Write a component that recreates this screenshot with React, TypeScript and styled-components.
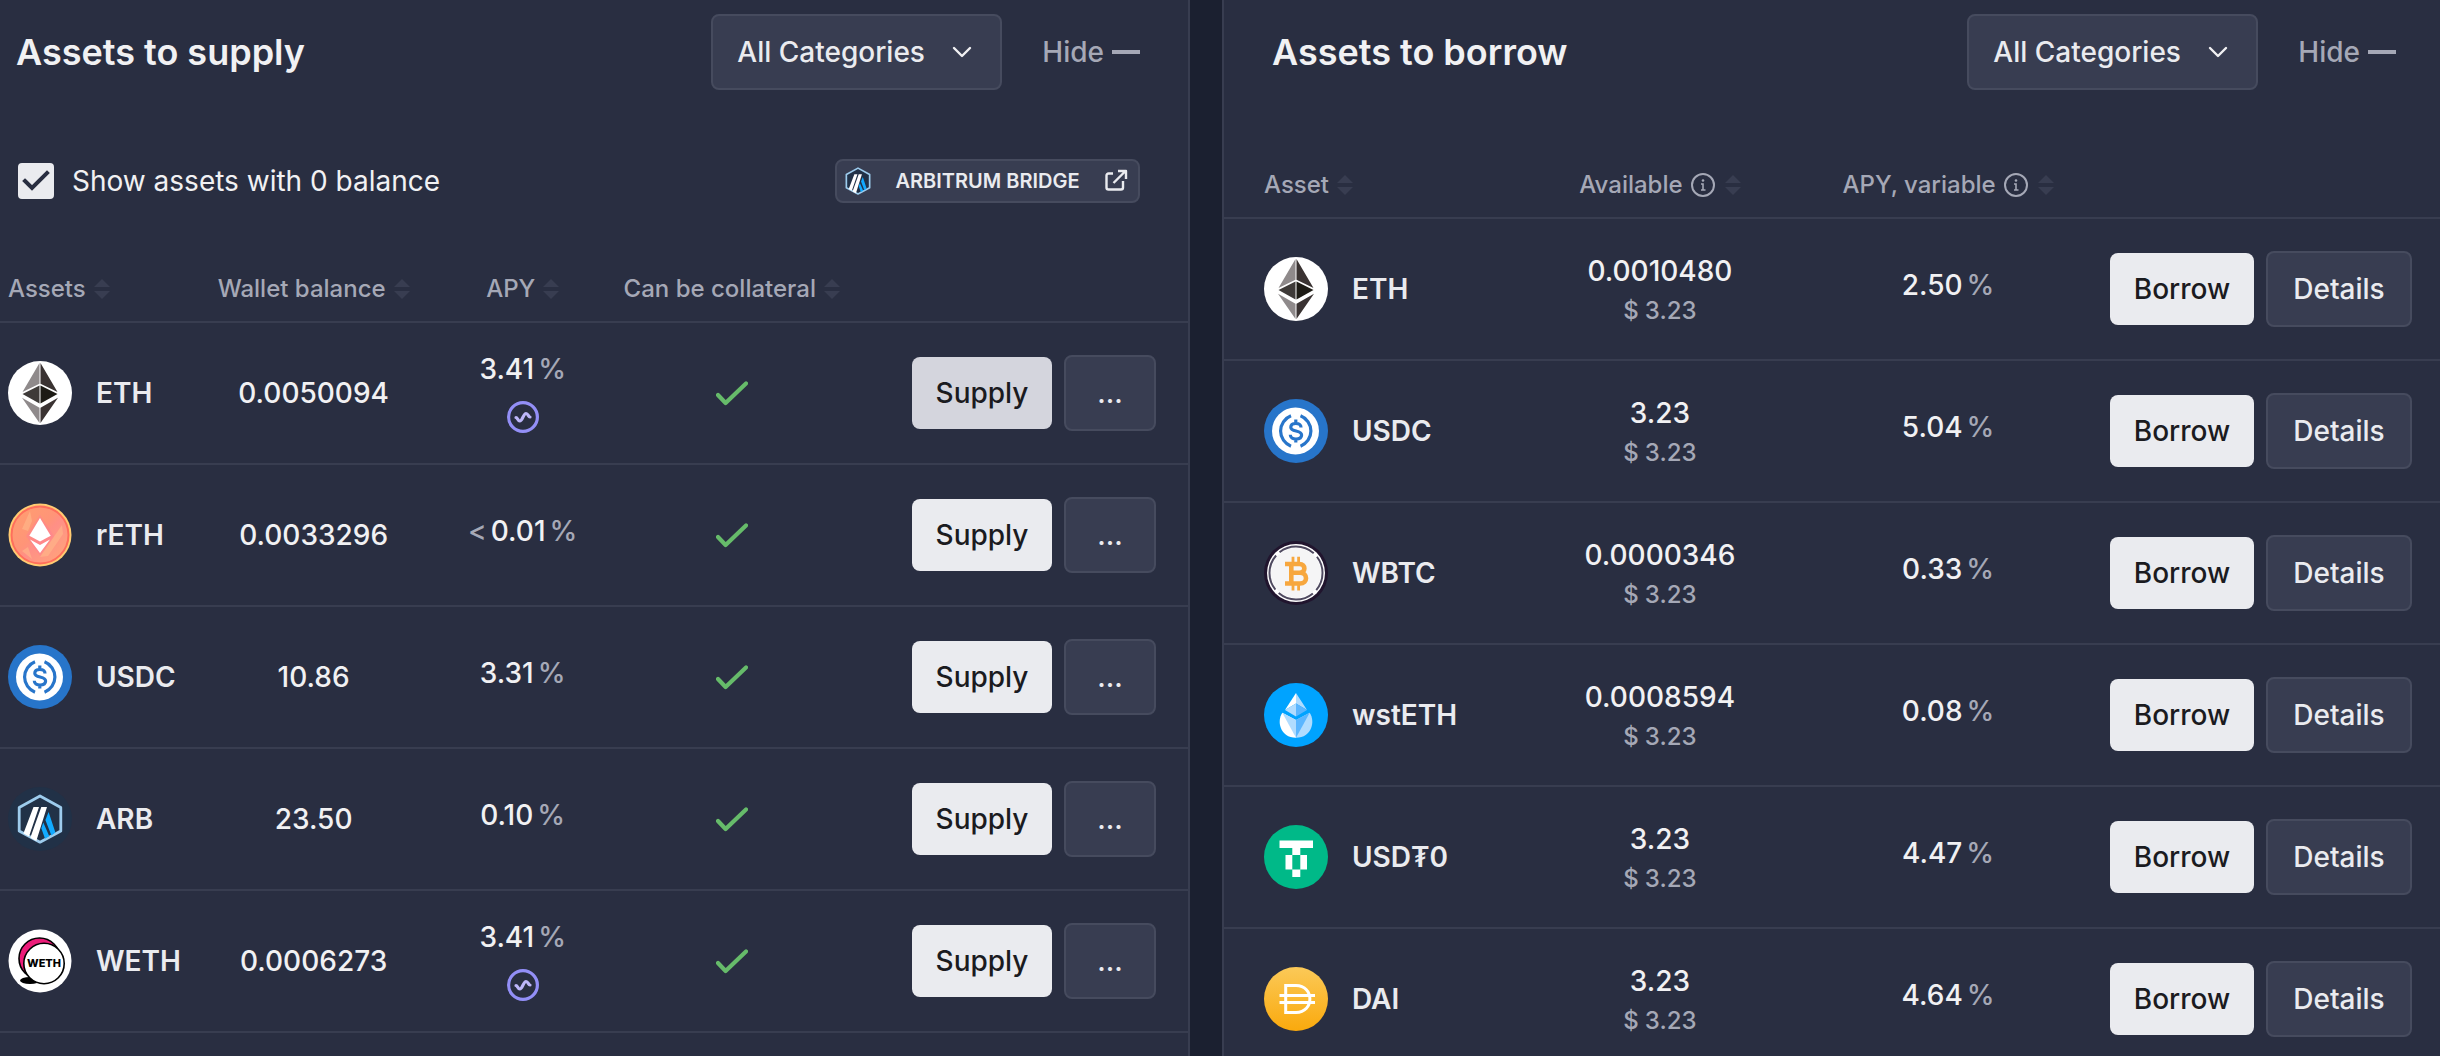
import React, { useState } from 'react';
import styled, { createGlobalStyle } from 'styled-components';

const color = {
  page: '#1b2030',
  panel: '#292e41',
  surface: '#383d51',
  outline: '#464b5e',
  divider: '#383d50',
  text: '#f1f1f3',
  light: '#eaebef',
  hover: '#d4d5dd',
  muted: '#a5a8b6',
  sort: '#383d51',
};

const GlobalStyle = createGlobalStyle`
  *, *::before, *::after { box-sizing: border-box; }
  body {
    margin: 0;
    background: ${color.page};
    color: ${color.text};
    font-family: Inter, "Liberation Sans", sans-serif;
    font-size: 28px;
    line-height: 40px;
  }
  button, input, select { font: inherit; margin: 0; }
  svg { display: block; flex: none; }
`;

const Dashboard = styled.main`
  display: grid;
  grid-template-columns: 1190fr 1218fr;
  gap: 32px;
  height: 100vh;
  overflow: hidden;
`;

const Panel = styled.section<{ $edge: 'left' | 'right' }>`
  min-width: 0;
  background: ${color.panel};
  ${(p) => `border-${p.$edge}: 2px solid ${color.divider};`}
`;

const PanelHeader = styled.header<{ $start: number; $end: number }>`
  display: flex;
  align-items: center;
  padding: 14px ${(p) => p.$end}px 0 ${(p) => p.$start}px;
`;

const Title = styled.h2`
  flex: 1;
  margin: 0;
  font-size: 36px;
  font-weight: 600;
  line-height: 52px;
`;

const SelectBox = styled.div`
  display: grid;
  align-items: center;
  & > * { grid-area: 1 / 1; }
  & > svg { justify-self: end; margin-right: 30px; pointer-events: none; }
`;

const Select = styled.select`
  appearance: none;
  width: 291px;
  height: 76px;
  padding: 0 24px;
  border: 2px solid ${color.outline};
  border-radius: 8px;
  background: ${color.surface};
  color: ${color.light};
  font-weight: 500;
`;

const HideButton = styled.button`
  display: flex;
  align-items: center;
  gap: 8px;
  margin-left: 40px;
  padding: 0;
  border: 0;
  background: none;
  color: ${color.muted};
  font-weight: 500;
`;

const Dash = styled.span`
  width: 28px;
  height: 4px;
  background: ${color.muted};
`;

const Toolbar = styled.div`
  display: flex;
  align-items: center;
  justify-content: space-between;
  margin: 69px 48px 54px 18px;
`;

const CheckLabel = styled.label`
  display: flex;
  align-items: center;
  gap: 18px;
`;

const CheckBox = styled.span`
  display: grid;
  place-items: center;
  & > * { grid-area: 1 / 1; }
  & > svg { pointer-events: none; }
`;

const CheckInput = styled.input`
  appearance: none;
  width: 36px;
  height: 36px;
  border-radius: 4px;
  border: 2px solid ${color.light};
  &:checked { background: ${color.light}; }
`;

const BridgeLink = styled.a`
  display: flex;
  align-items: center;
  height: 44px;
  padding: 0 10px 0 8px;
  border: 2px solid ${color.outline};
  border-radius: 8px;
  background: ${color.surface};
  color: ${color.light};
  font-size: 20px;
  font-weight: 600;
  line-height: 24px;
  text-decoration: none;
  text-transform: uppercase;
`;

const BridgeText = styled.span`
  min-width: 233px;
  padding: 0 20px;
  text-align: center;
`;

const Table = styled.table<{ $top?: number }>`
  width: 100%;
  table-layout: fixed;
  border-collapse: separate;
  border-spacing: 0;
  margin-top: ${(p) => p.$top ?? 0}px;
`;

const HeadCell = styled.th<{ $inset?: number }>`
  height: 66px;
  padding: 0 0 0 ${(p) => p.$inset ?? 0}px;
  border-bottom: 2px solid ${color.divider};
`;

const HeadLabel = styled.div<{ $start?: boolean }>`
  display: flex;
  justify-content: ${(p) => (p.$start ? 'flex-start' : 'center')};
`;

const SortButton = styled.button`
  display: flex;
  flex: none;
  align-items: center;
  padding: 0;
  border: 0;
  background: none;
  color: ${color.muted};
  font-size: 24px;
  font-weight: 500;
  line-height: 32px;
  white-space: nowrap;
  & > svg { margin-left: 8px; }
  & > svg + svg { margin-left: 10px; }
`;

const Cell = styled.td<{ $inset?: number; $end?: number }>`
  height: 142px;
  padding: 0 ${(p) => p.$end ?? 0}px 0 ${(p) => p.$inset ?? 0}px;
  border-bottom: 2px solid ${color.divider};
  vertical-align: middle;
  font-weight: 500;
  text-align: center;
`;

const Asset = styled.div`
  display: flex;
  align-items: center;
  gap: 24px;
  color: ${color.light};
  font-weight: 600;
`;

const Stack = styled.div<{ $gap: number }>`
  display: flex;
  flex-direction: column;
  align-items: center;
  gap: ${(p) => p.$gap}px;
`;

const Rate = styled.div`
  display: flex;
  gap: 4px;
  padding-bottom: 8px;
  line-height: 32px;
`;

const Soft = styled.span`
  color: ${color.muted};
`;

const Amount = styled.div`
  line-height: 40px;
`;

const Dollars = styled.div`
  display: flex;
  gap: 6px;
  color: ${color.muted};
  font-size: 24px;
  line-height: 32px;
`;

const Centered = styled.div`
  display: flex;
  justify-content: center;
`;

const Actions = styled.div`
  display: flex;
  align-items: center;
  justify-content: flex-end;
  gap: 12px;
`;

const Button = styled.button<{ $hovered?: boolean; $width: number }>`
  width: ${(p) => p.$width}px;
  height: 72px;
  padding: 0;
  border: 0;
  border-radius: 8px;
  background: ${(p) => (p.$hovered ? color.hover : color.light)};
  color: #1b1b1f;
  font-weight: 500;
`;

const OutlineButton = styled(Button)`
  height: 76px;
  border: 2px solid ${color.outline};
  background: ${color.surface};
  color: ${color.light};
`;

const Chevron = () => (
  <svg width="20" height="12" viewBox="0 0 20 12" fill="none" stroke="#f1f1f3" strokeWidth="2.400" strokeLinecap="round" strokeLinejoin="round">
    <path d="M2 2l8 8 8-8" />
  </svg>
);

const SortIcon = () => (
  <svg width="16" height="20" viewBox="0 0 16 20" fill={color.sort}>
    <path d="M8 0l8 8H0zM8 20l8-8H0z" />
  </svg>
);

const InfoIcon = () => (
  <svg width="24" height="24" viewBox="0 0 24 24" fill="none" stroke={color.muted} strokeWidth="2">
    <circle cx="12" cy="12" r="11" />
    <path d="M10 11h2v6M10 17h4.500" strokeWidth="1.600" />
    <circle cx="12" cy="7.500" r="1.300" fill={color.muted} stroke="none" />
  </svg>
);

const Tick = () => (
  <svg width="32" height="26" viewBox="0 0 32 26" fill="none" stroke="#66bb6a" strokeWidth="4.200" strokeLinecap="round" strokeLinejoin="round">
    <path d="M2 15l7.600 8L30 3.500" />
  </svg>
);

const BoxTick = () => (
  <svg width="28" height="24" viewBox="0 0 28 24" fill="none" stroke={color.panel} strokeWidth="4" strokeLinecap="square">
    <path d="M3 12l7 7L25 4" />
  </svg>
);

const IncentiveIcon = () => (
  <svg width="32" height="32" viewBox="0 0 32 32" fill="none">
    <circle cx="16" cy="16" r="14.400" stroke="#938ff7" strokeWidth="3.200" />
    <path d="M9 16.500c1.500 0 1.700 3.500 3.700 3.500 3.200 0 3.300-7.500 6.400-7.500 2 0 2.200 3.500 3.900 3.500" stroke="#bdb6f9" strokeWidth="3.200" strokeLinecap="round" />
  </svg>
);

const ExternalIcon = () => (
  <svg width="24" height="24" viewBox="0 0 24 24" fill="none" stroke={color.light} strokeWidth="2.400" strokeLinejoin="round">
    <path d="M9 4.500H4.500a2 2 0 0 0-2 2V18.500a2 2 0 0 0 2 2H17a2 2 0 0 0 2-2V12M9.500 14L21 2.500M14 2h8v8" />
  </svg>
);

const ArbitrumMark = ({ line }: { line: number }) => (
  <>
    <path d="M32 9l20.800 11.500v23.500L32 55.200 11.200 44V20.500z" fill="#213147" stroke="#9dcced" strokeWidth={line} strokeLinejoin="round" />
    <path d="M40.600 25l6.800 20.500-4 3-6-15.500zM35.300 35.500l6 13.800-4.300 2.400-3.700-10.500z" fill="#12aaff" />
    <path d="M25.500 20H31L21 49.500l-5.600-3zM33.300 20H39L28.300 54l-6-3.300z" fill="#fff" />
  </>
);

const BridgeIcon = () => (
  <svg width="26" height="28" viewBox="9 7 46 50">
    <ArbitrumMark line={3} />
  </svg>
);

type TokenName = 'ETH' | 'rETH' | 'USDC' | 'ARB' | 'WETH' | 'WBTC' | 'wstETH' | 'USD₮0' | 'DAI';

const tokenArt: Record<TokenName, React.ReactNode> = {
  ETH: (
    <>
      <circle cx="32" cy="32" r="32" fill="#fff" />
      <path d="M31.500 2v20.800L14.500 31zM31.500 62V46.800l-17.500-10z" fill="#8f8a8b" />
      <path d="M32.500 2v20.800L49.500 31zM32.500 62V46.800l17.500-10z" fill="#3a3332" />
      <path d="M31.500 24.500v18L14.500 33z" fill="#3e3a38" />
      <path d="M32.500 24.500v18L49.500 33z" fill="#1d1b15" />
    </>
  ),
  rETH: (
    <>
      <defs>
        <linearGradient id="reth" x1="0" y1="0" x2="1" y2="1">
          <stop offset="0" stopColor="#ff9f6e" />
          <stop offset="0.45" stopColor="#ff9478" />
          <stop offset="0.55" stopColor="#ff8f86" />
          <stop offset="1" stopColor="#ffa878" />
        </linearGradient>
      </defs>
      <circle cx="32" cy="32" r="31.500" fill="#ffcb72" />
      <circle cx="32" cy="32" r="28.500" fill="url(#reth)" stroke="#ff6f5c" strokeWidth="2" />
      <path d="M22 8l-8 18 6 2 4-10zM54 22L32 54l8-1 15-22zM20 44l-6 4 10 8z" fill="#ffb98a" opacity="0.6" />
      <path d="M32 12L18 33l14 20 14-20z" fill="#ff7f93" opacity="0.45" />
      <path d="M32 15l10.700 17.700L32 38.500l-10.700-5.800z" fill="#fff" />
      <path d="M22 36.500l10 5.500 10-5.500-10 13.500z" fill="#fff" />
    </>
  ),
  USDC: (
    <>
      <circle cx="32" cy="32" r="32" fill="#2775ca" />
      <circle cx="31.500" cy="32" r="23.500" fill="#fff" />
      <g fill="none" stroke="#2775ca" strokeWidth="3.200">
        <path d="M27 16.800a16.300 16.300 0 0 0 0 30.400M36.500 16.800a16.300 16.300 0 0 1 0 30.400" />
        <path d="M37 28.500c0-2.500-2-4-5.200-4-3 0-5 1.300-5 3.700 0 5.300 10.800 2.200 10.800 7.800 0 2.500-2.300 4-5.600 4s-5.700-1.600-5.700-4.300M31.800 20.500v4M31.800 40v3.500" />
      </g>
    </>
  ),
  ARB: (
    <>
      <circle cx="32" cy="32" r="32" fill="#213147" />
      <ArbitrumMark line={2.8} />
    </>
  ),
  WETH: (
    <>
      <circle cx="32" cy="32" r="31.500" fill="#fff" />
      <ellipse cx="22" cy="51.500" rx="10" ry="3.500" fill="#000" />
      <circle cx="31.500" cy="29.500" r="20.500" fill="#ec1c79" stroke="#000" strokeWidth="1.600" />
      <circle cx="36" cy="34.500" r="20.200" fill="#fff" stroke="#000" strokeWidth="1.600" />
      <text x="36" y="37.500" fontFamily="Inter, sans-serif" fontSize="11" fontWeight="800" textAnchor="middle" fill="#000">WETH</text>
    </>
  ),
  WBTC: (
    <>
      <circle cx="32" cy="32" r="32" fill="#21152e" />
      <circle cx="32" cy="32" r="29" fill="#fff" />
      <circle cx="32" cy="32" r="25" fill="#f5f5f6" />
      <circle cx="32" cy="32" r="26.500" fill="none" stroke="#4f4a60" strokeWidth="2" strokeDasharray="37 4.625" strokeDashoffset="18.500" />
      <g fill="none" stroke="#f7a73e" strokeWidth="4.600">
        <path d="M21 23h14.500c6.500 0 6.500 8.800 0 8.800H28M21 42.500h15c8 0 8-10.700 0-10.700" />
        <path d="M27.300 22v21" />
        <path d="M29 15.700v6M34.600 15.700v6M29 43.500v6M34.600 43.500v6" strokeWidth="2.800" />
      </g>
    </>
  ),
  wstETH: (
    <>
      <circle cx="32" cy="32" r="32" fill="#00a3ff" />
      <path d="M32 10L21 27l11-6.500z" fill="#fff" />
      <path d="M32 10l11 17-11-6.500zM32 20.500L21 27l11 6.500z" fill="#b0dcff" />
      <path d="M32 20.500L43 27l-11 6.500z" fill="#5bb6ff" />
      <path d="M18.300 29.700C12.500 38 16 54.700 32 54.700V37z" fill="#fff" />
      <path d="M45.700 29.700C51.500 38 48 54.700 32 54.700V37z" fill="#b0dcff" />
      <path d="M18.300 29.700L32 37v17.700z" fill="#b0dcff" />
      <path d="M45.700 29.700L32 37v17.700z" fill="#5bb6ff" />
    </>
  ),
  'USD₮0': (
    <>
      <circle cx="32" cy="32" r="32" fill="#00b988" />
      <path d="M15.500 15.500H49V23H36.300v7H43v14.500h-6.700V52h-8v-7.500H21.500V30h6.800v-7H15.500zM28.300 30v14.500h8V30z" fill="#fff" fillRule="evenodd" />
    </>
  ),
  DAI: (
    <>
      <defs>
        <linearGradient id="dai" x1="0" y1="0" x2="0" y2="1">
          <stop offset="0" stopColor="#fbc958" />
          <stop offset="1" stopColor="#faa90d" />
        </linearGradient>
      </defs>
      <circle cx="32" cy="32" r="32" fill="url(#dai)" />
      <path d="M21.700 18.600v26.800H32c18.500 0 18.500-26.800 0-26.800zM15.500 28.500H51M15.500 35.500H51" fill="none" stroke="#fff" strokeWidth="3" />
    </>
  ),
};

const TokenIcon = ({ name }: { name: TokenName }) => (
  <svg width="64" height="64" viewBox="0 0 64 64" aria-hidden="true">
    {tokenArt[name]}
  </svg>
);

const supplyRows: { name: TokenName; balance: string; apy: string; below?: boolean; incentive?: boolean }[] = [
  { name: 'ETH', balance: '0.0050094', apy: '3.41', incentive: true },
  { name: 'rETH', balance: '0.0033296', apy: '0.01', below: true },
  { name: 'USDC', balance: '10.86', apy: '3.31' },
  { name: 'ARB', balance: '23.50', apy: '0.10' },
  { name: 'WETH', balance: '0.0006273', apy: '3.41', incentive: true },
];

const borrowRows: { name: TokenName; available: string; apy: string }[] = [
  { name: 'ETH', available: '0.0010480', apy: '2.50' },
  { name: 'USDC', available: '3.23', apy: '5.04' },
  { name: 'WBTC', available: '0.0000346', apy: '0.33' },
  { name: 'wstETH', available: '0.0008594', apy: '0.08' },
  { name: 'USD₮0', available: '3.23', apy: '4.47' },
  { name: 'DAI', available: '3.23', apy: '4.64' },
];

const Header = ({ title, start, end }: { title: string; start: number; end: number }) => (
  <PanelHeader $start={start} $end={end}>
    <Title>{title}</Title>
    <SelectBox>
      <Select aria-label={`${title}: category`}>
        <option>All Categories</option>
      </Select>
      <Chevron />
    </SelectBox>
    <HideButton type="button">
      Hide
      <Dash />
    </HideButton>
  </PanelHeader>
);

const SortHead = ({ label, info, inset }: { label: string; info?: boolean; inset?: number }) => (
  <HeadCell scope="col" $inset={inset}>
    <HeadLabel $start={inset !== undefined}>
      <SortButton type="button">
        {label}
        {info && <InfoIcon />}
        <SortIcon />
      </SortButton>
    </HeadLabel>
  </HeadCell>
);

const Columns = ({ widths }: { widths: string[] }) => (
  <colgroup>
    {widths.map((width, i) => (
      <col key={i} style={{ width }} />
    ))}
  </colgroup>
);

const Apy = ({ value, below }: { value: string; below?: boolean }) => (
  <Rate>
    {below && <Soft>&lt;</Soft>}
    <span>{value}</span>
    <Soft>%</Soft>
  </Rate>
);

export default function App() {
  const [showEmpty, setShowEmpty] = useState(true);

  return (
    <>
      <GlobalStyle />
      <Dashboard>
        <Panel $edge="right">
          <Header title="Assets to supply" start={16} end={48} />
          <Toolbar>
            <CheckLabel>
              <CheckBox>
                <CheckInput type="checkbox" checked={showEmpty} onChange={(e) => setShowEmpty(e.target.checked)} />
                {showEmpty && <BoxTick />}
              </CheckBox>
              Show assets with 0 balance
            </CheckLabel>
            <BridgeLink href="#bridge">
              <BridgeIcon />
              <BridgeText>Arbitrum Bridge</BridgeText>
              <ExternalIcon />
            </BridgeLink>
          </Toolbar>
          <Table>
            <Columns widths={['17.6%', '17.6%', '17.6%', '17.6%', '29.6%']} />
            <thead>
              <tr>
                <SortHead label="Assets" inset={8} />
                <SortHead label="Wallet balance" />
                <SortHead label="APY" />
                <SortHead label="Can be collateral" />
                <HeadCell />
              </tr>
            </thead>
            <tbody>
              {supplyRows.map((row, i) => (
                <tr key={row.name}>
                  <Cell $inset={8}>
                    <Asset>
                      <TokenIcon name={row.name} />
                      {row.name}
                    </Asset>
                  </Cell>
                  <Cell>{row.balance}</Cell>
                  <Cell>
                    <Stack $gap={8}>
                      <Apy value={row.apy} below={row.below} />
                      {row.incentive && <IncentiveIcon />}
                    </Stack>
                  </Cell>
                  <Cell>
                    <Centered>
                      <Tick />
                    </Centered>
                  </Cell>
                  <Cell $end={32}>
                    <Actions>
                      <Button type="button" $width={140} $hovered={i === 0}>Supply</Button>
                      <OutlineButton type="button" $width={92}>...</OutlineButton>
                    </Actions>
                  </Cell>
                </tr>
              ))}
            </tbody>
          </Table>
        </Panel>

        <Panel $edge="left">
          <Header title="Assets to borrow" start={48} end={44} />
          <Table $top={63}>
            <Columns widths={['24%', '23.7%', '23.7%', '28.6%']} />
            <thead>
              <tr>
                <SortHead label="Asset" inset={40} />
                <SortHead label="Available" info />
                <SortHead label="APY, variable" info />
                <HeadCell />
              </tr>
            </thead>
            <tbody>
              {borrowRows.map((row) => (
                <tr key={row.name}>
                  <Cell $inset={40}>
                    <Asset>
                      <TokenIcon name={row.name} />
                      {row.name}
                    </Asset>
                  </Cell>
                  <Cell>
                    <Stack $gap={4}>
                      <Amount>{row.available}</Amount>
                      <Dollars>
                        <span>$</span>
                        <span>3.23</span>
                      </Dollars>
                    </Stack>
                  </Cell>
                  <Cell>
                    <Stack $gap={0}>
                      <Apy value={row.apy} />
                    </Stack>
                  </Cell>
                  <Cell $end={28}>
                    <Actions>
                      <Button type="button" $width={144}>Borrow</Button>
                      <OutlineButton type="button" $width={146}>Details</OutlineButton>
                    </Actions>
                  </Cell>
                </tr>
              ))}
            </tbody>
          </Table>
        </Panel>
      </Dashboard>
    </>
  );
}
